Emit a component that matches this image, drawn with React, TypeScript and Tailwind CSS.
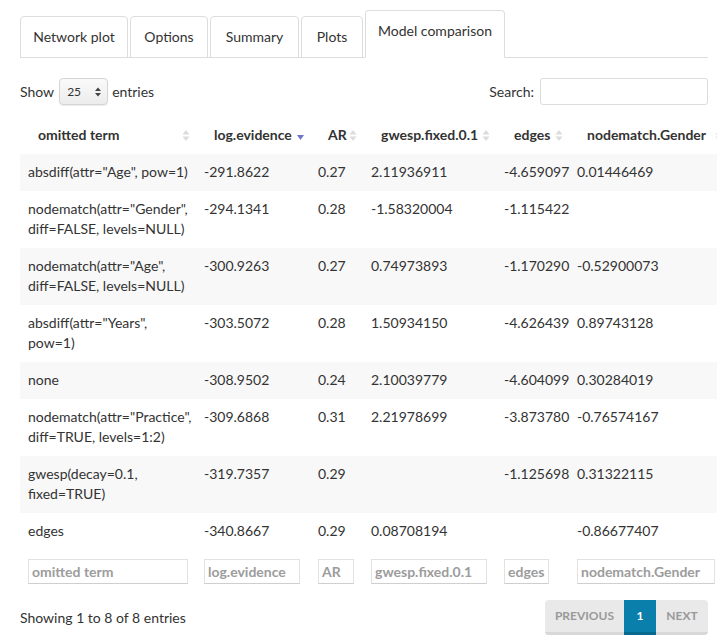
import React from "react";

const tabs = [
  { label: "Network plot", w: "w-[108px]" },
  { label: "Options", w: "w-[78px]" },
  { label: "Summary", w: "w-[89px]" },
  { label: "Plots", w: "w-[62px]" },
];

const columns = [
  { label: "omitted term", w: "w-[176px]", input: "w-[160px]" },
  { label: "log.evidence", w: "w-[114px]", input: "w-[96px]" },
  { label: "AR", w: "w-[53px]", input: "w-[36px]" },
  { label: "gwesp.fixed.0.1", w: "w-[133px]", input: "w-[116px]" },
  { label: "edges", w: "w-[73px]", input: "w-[45px]" },
  { label: "nodematch.Gender", w: "w-[160px]", input: "w-[138px]" },
];

const rows: [string[], string, string, string, string, string][] = [
  [['absdiff(attr="Age", pow=1)'], "-291.8622", "0.27", "2.11936911", "-4.659097", "0.01446469"],
  [['nodematch(attr="Gender",', "diff=FALSE, levels=NULL)"], "-294.1341", "0.28", "-1.58320004", "-1.115422", ""],
  [['nodematch(attr="Age",', "diff=FALSE, levels=NULL)"], "-300.9263", "0.27", "0.74973893", "-1.170290", "-0.52900073"],
  [['absdiff(attr="Years",', "pow=1)"], "-303.5072", "0.28", "1.50934150", "-4.626439", "0.89743128"],
  [["none"], "-308.9502", "0.24", "2.10039779", "-4.604099", "0.30284019"],
  [['nodematch(attr="Practice",', "diff=TRUE, levels=1:2)"], "-309.6868", "0.31", "2.21978699", "-3.873780", "-0.76574167"],
  [["gwesp(decay=0.1,", "fixed=TRUE)"], "-319.7357", "0.29", "", "-1.125698", "0.31322115"],
  [["edges"], "-340.8667", "0.29", "0.08708194", "", "-0.86677407"],
];

function SortIcon({ active }: { active?: boolean }) {
  if (active) {
    return (
      <svg width="9" height="12" viewBox="0 0 9 12" className="absolute right-[5px] top-[14px]">
        <path d="M1 4 L8 4 L4.5 9 Z" fill="#6b76cc" />
      </svg>
    );
  }
  return (
    <svg width="8" height="13" viewBox="0 0 8 13" className="absolute right-[6px] top-[12px]">
      <path d="M0.5 5.5 L4 1 L7.5 5.5 Z" fill="#dcdcdc" />
      <path d="M0.5 7.5 L4 12 L7.5 7.5 Z" fill="#dcdcdc" />
    </svg>
  );
}

export default function App() {
  return (
    <div className="w-[717px] h-[644px] overflow-hidden bg-white text-[#333] text-[14px] font-['Lato',_'Open_Sans',_sans-serif]">
      <div className="pt-[10px] pl-[20px] pr-[9px]">
        {/* tabs */}
        <div className="flex items-end border-b border-[#ddd]">
          {tabs.map((t) => (
            <div
              key={t.label}
              className={`${t.w} -mb-px mr-[2px] rounded-t-[4px] border border-[#ddd] pt-[10px] pb-[10px] text-center leading-[20px]`}
            >
              {t.label}
            </div>
          ))}
          <div className="w-[140px] -mb-px rounded-t-[4px] border border-[#ddd] border-b-white bg-white pt-[10px] pb-[16px] text-center leading-[20px]">
            Model comparison
          </div>
        </div>

        {/* length + search */}
        <div className="mt-[20px] flex h-[27px] items-center justify-between">
          <div className="flex items-center">
            <span>Show</span>
            <div className="ml-[5px] mr-[4px] flex h-[27px] w-[49px] items-center justify-between rounded-[4px] border border-[#d4d4d4] bg-gradient-to-b from-[#fafafa] to-[#ececec] pl-[7px] pr-[6px] text-[12px] shadow-[0_1px_1px_rgba(0,0,0,0.08)]">
              <span>25</span>
              <svg width="6" height="10" viewBox="0 0 6 10">
                <path d="M0 4 L3 0.5 L6 4 Z" fill="#444" />
                <path d="M0 6 L3 9.5 L6 6 Z" fill="#444" />
              </svg>
            </div>
            <span>entries</span>
          </div>
          <div className="flex items-center">
            <span>Search:</span>
            <div className="ml-[6px] h-[27px] w-[168px] rounded-[3px] border border-[#dcdcdc] bg-white" />
          </div>
        </div>

        {/* table */}
        <table className="mt-[12px] w-[709px] table-fixed border-collapse">
          <colgroup>
            {columns.map((c) => (
              <col key={c.label} className={c.w} />
            ))}
          </colgroup>
          <thead>
            <tr>
              {columns.map((c, i) => (
                <th
                  key={c.label}
                  className="relative whitespace-nowrap pl-[18px] pr-[16px] pt-[8px] pb-[9px] text-left font-bold leading-[20px]"
                >
                  {c.label}
                  <SortIcon active={i === 1} />
                </th>
              ))}
            </tr>
          </thead>
          <tbody>
            {rows.map((r, i) => (
              <tr key={i} className={i % 2 === 0 ? "bg-[#f8f8f8]" : "bg-white"}>
                <td className="whitespace-nowrap px-[8px] pt-[8px] pb-[9px] align-top leading-[20px]">
                  {r[0].map((line) => (
                    <div key={line}>{line}</div>
                  ))}
                </td>
                {r.slice(1).map((v, j) => (
                  <td key={j} className="whitespace-nowrap px-[8px] pt-[8px] pb-[9px] align-top leading-[20px]">
                    {v}
                  </td>
                ))}
              </tr>
            ))}
          </tbody>
          <tfoot>
            <tr>
              {columns.map((c) => (
                <td key={c.label} className="px-[8px] pt-[9px] pb-[8px]">
                  <input
                    placeholder={c.label}
                    className={`${c.input} block h-[25px] border border-[#e2e2e2] border-b-[#cfcfcf] pl-[3px] text-[14px] font-bold outline-none placeholder:font-bold placeholder:text-[#9c9c9c]`}
                  />
                </td>
              ))}
            </tr>
          </tfoot>
        </table>

        {/* info + pagination */}
        <div className="mt-[8px] flex items-center justify-between">
          <span>Showing 1 to 8 of 8 entries</span>
          <div className="flex overflow-hidden rounded-[4px] text-[12px] font-bold">
            <div className="flex h-[35px] w-[79px] items-center justify-center border-b-[3px] border-[#d8d8d8] bg-[#e9e9e9] text-[#999]">
              PREVIOUS
            </div>
            <div className="flex h-[35px] w-[32px] items-center justify-center border-b-[3px] border-[#066a8e] bg-[#0a7fab] text-white">
              1
            </div>
            <div className="flex h-[35px] w-[52px] items-center justify-center border-b-[3px] border-[#d8d8d8] bg-[#e9e9e9] text-[#999]">
              NEXT
            </div>
          </div>
        </div>
      </div>
    </div>
  );
}
